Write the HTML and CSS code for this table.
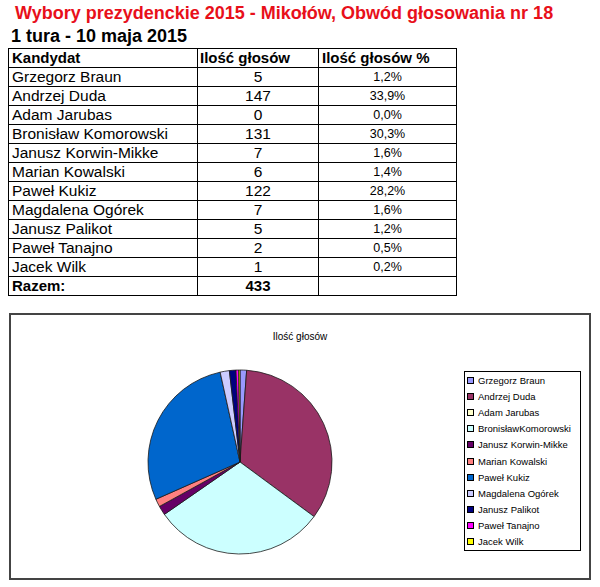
FILE: index.html
```html
<!DOCTYPE html>
<html lang="pl">
<head>
<meta charset="utf-8">
<title>Wybory prezydenckie 2015 - Mikołów</title>
<link rel="stylesheet" href="styles.css">
</head>
<body>
<div class="page">
  <h1 class="title">Wybory prezydenckie 2015 - Mikołów, Obwód głosowania nr 18</h1>
  <h2 class="subtitle">1 tura - 10 maja 2015</h2>
  <table class="results">
    <colgroup><col class="c1"><col class="c2"><col class="c3"></colgroup>
    <thead>
      <tr><th class="name">Kandydat</th><th class="hcount">Ilość głosów</th><th class="hpct">Ilość głosów %</th></tr>
    </thead>
    <tbody>
      <tr><td class="name">Grzegorz Braun</td><td class="count">5</td><td class="pct">1,2%</td></tr>
      <tr><td class="name">Andrzej Duda</td><td class="count">147</td><td class="pct">33,9%</td></tr>
      <tr><td class="name">Adam Jarubas</td><td class="count">0</td><td class="pct">0,0%</td></tr>
      <tr><td class="name">Bronisław Komorowski</td><td class="count">131</td><td class="pct">30,3%</td></tr>
      <tr><td class="name">Janusz Korwin-Mikke</td><td class="count">7</td><td class="pct">1,6%</td></tr>
      <tr><td class="name">Marian Kowalski</td><td class="count">6</td><td class="pct">1,4%</td></tr>
      <tr><td class="name">Paweł Kukiz</td><td class="count">122</td><td class="pct">28,2%</td></tr>
      <tr><td class="name">Magdalena Ogórek</td><td class="count">7</td><td class="pct">1,6%</td></tr>
      <tr><td class="name">Janusz Palikot</td><td class="count">5</td><td class="pct">1,2%</td></tr>
      <tr><td class="name">Paweł Tanajno</td><td class="count">2</td><td class="pct">0,5%</td></tr>
      <tr><td class="name">Jacek Wilk</td><td class="count">1</td><td class="pct">0,2%</td></tr>
      <tr class="total"><td class="name">Razem:</td><td class="count">433</td><td class="pct"></td></tr>
    </tbody>
  </table>

  <div class="chart">
    <div class="chart-title">Ilość głosów</div>
    <div class="chart-body">
      <svg class="pie" width="190" height="190" viewBox="0 0 190 190">
        <g stroke="#1a1a1a" stroke-width="0.8" stroke-linejoin="round">
          <path d="M95,95 L95,3 A92,92 0 0 1 101.669,3.242 Z" fill="#9999FF"/>
          <path d="M95,95 L101.669,3.242 A92,92 0 0 1 169.057,149.585 Z" fill="#993366"/>
          <path d="M95,95 L169.057,149.585 A92,92 0 0 1 19.372,147.389 Z" fill="#CCFFFF"/>
          <path d="M95,95 L19.372,147.389 A92,92 0 0 1 14.450,139.450 Z" fill="#660066"/>
          <path d="M95,95 L14.450,139.450 A92,92 0 0 1 10.888,132.274 Z" fill="#FF8080"/>
          <path d="M95,95 L10.888,132.274 A92,92 0 0 1 75.134,5.170 Z" fill="#0066CC"/>
          <path d="M95,95 L75.134,5.170 A92,92 0 0 1 84.344,3.619 Z" fill="#CCCCFF"/>
          <path d="M95,95 L84.344,3.619 A92,92 0 0 1 90.997,3.087 Z" fill="#000080"/>
          <path d="M95,95 L90.997,3.087 A92,92 0 0 1 93.666,3.009 Z" fill="#FF00FF"/>
          <path d="M95,95 L93.666,3.009 A92,92 0 0 1 95,3 Z" fill="#FFFF00"/>
        </g>
      </svg>
      <ul class="legend">
        <li><span class="sw sw-braun"></span>Grzegorz Braun</li>
        <li><span class="sw sw-duda"></span>Andrzej Duda</li>
        <li><span class="sw sw-jarubas"></span>Adam Jarubas</li>
        <li><span class="sw sw-komorowski"></span>BronisławKomorowski</li>
        <li><span class="sw sw-korwin"></span>Janusz Korwin-Mikke</li>
        <li><span class="sw sw-kowalski"></span>Marian Kowalski</li>
        <li><span class="sw sw-kukiz"></span>Paweł Kukiz</li>
        <li><span class="sw sw-ogorek"></span>Magdalena Ogórek</li>
        <li><span class="sw sw-palikot"></span>Janusz Palikot</li>
        <li><span class="sw sw-tanajno"></span>Paweł Tanajno</li>
        <li><span class="sw sw-wilk"></span>Jacek Wilk</li>
      </ul>
    </div>
  </div>
</div>
</body>
</html>
```
FILE: styles.css
```css
html, body {
  margin: 0;
  padding: 0;
  background: #fff;
}

body {
  font-family: "Liberation Sans", Arial, sans-serif;
  color: #000;
}

.page {
  padding-top: 2px;
  width: 600px;
}

.title {
  margin: 0;
  padding-left: 15px;
  font-size: 18px;
  line-height: 23px;
  font-weight: bold;
  color: #e8101a;
}

.subtitle {
  margin: 0;
  padding-left: 11px;
  font-size: 18px;
  line-height: 23px;
  font-weight: bold;
  color: #000;
}

.results {
  margin-left: 8px;
  border-collapse: collapse;
  table-layout: fixed;
  width: 448px;
}

.results .c1 { width: 189px; }
.results .c2 { width: 121px; }
.results .c3 { width: 138px; }

.results th,
.results td {
  border: 1px solid #000;
  height: 18px;
  padding: 0 3px;
  font-size: 15.5px;
  line-height: 18px;
  white-space: nowrap;
  overflow: hidden;
}

.results th {
  font-size: 15px;
  font-weight: bold;
  text-align: left;
}

.results th.hcount {
  padding-left: 2px;
}

.results td.name {
  text-align: left;
}

.results td.count {
  text-align: center;
}

.results td.pct {
  text-align: center;
  font-size: 12.5px;
}

.results .total td {
  font-size: 15px;
  font-weight: bold;
}

.chart {
  margin: 17px 0 0 9px;
  width: 578px;
  height: 263px;
  border: 2px solid #444;
}

.chart-title {
  padding-top: 16px;
  font-size: 10px;
  line-height: 12px;
  text-align: center;
  color: #000;
}

.chart-body {
  display: flex;
  align-items: flex-start;
}

.pie {
  display: block;
  margin: 24px 0 0 134px;
}

.legend {
  list-style: none;
  margin: 28px 0 0 129px;
  padding: 0;
  width: 115px;
  border: 1px solid #000;
}

.legend li {
  display: flex;
  align-items: center;
  height: 16.2px;
  font-size: 9.5px;
  white-space: nowrap;
}

.sw {
  flex: none;
  width: 5px;
  height: 5px;
  margin: 0 4px 0 2px;
  border: 1px solid #000;
}

.sw-braun { background: #9999FF; }
.sw-duda { background: #993366; }
.sw-jarubas { background: #FFFFCC; }
.sw-komorowski { background: #CCFFFF; }
.sw-korwin { background: #660066; }
.sw-kowalski { background: #FF8080; }
.sw-kukiz { background: #0066CC; }
.sw-ogorek { background: #CCCCFF; }
.sw-palikot { background: #000080; }
.sw-tanajno { background: #FF00FF; }
.sw-wilk { background: #FFFF00; }
```
